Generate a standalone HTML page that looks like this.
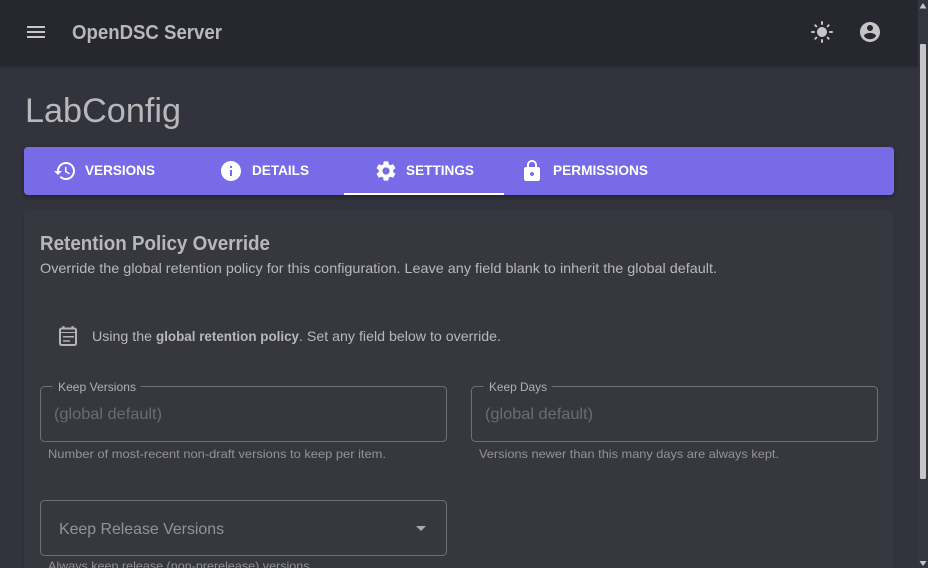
<!DOCTYPE html>
<html><head><meta charset="utf-8"><title>OpenDSC Server</title>
<style>
html,body{margin:0;padding:0;width:928px;height:568px;overflow:hidden;background:#32333d}
#w{position:relative;width:928px;height:568px;overflow:hidden;background:#32333d}
.a{position:absolute}
svg{position:absolute;left:0;top:0}
text{font-family:"Liberation Sans",sans-serif;white-space:pre}
</style></head>
<body>
<div id="w">
<div class="a" style="left:0;top:0;width:918px;height:66px;background:#27272f;box-shadow:0 1px 2px rgba(0,0,0,.2)"></div>
<div class="a" style="left:24px;top:147px;width:870px;height:48px;background:#776be7;border-radius:4px;box-shadow:0 2px 4px rgba(0,0,0,.3)"></div>
<div class="a" style="left:344px;top:193px;width:160px;height:2px;background:#fff"></div>
<div class="a" style="left:24px;top:211px;width:870px;height:357px;background:#373740;border-radius:4px 4px 0 0;box-shadow:0 2px 2px rgba(0,0,0,.14)"></div>
<div class="a" style="left:918px;top:0;width:10px;height:568px;background:#34353e"></div>
<div class="a" style="left:920px;top:44px;width:6px;height:435px;background:#c6c6c6;border-radius:1px"></div>
<svg width="928" height="568" viewBox="0 0 928 568">
<polygon points="923,3 919.5,8.5 926.5,8.5" fill="#c6c6c6"/>
<polygon points="919.5,561 926.5,561 923,566" fill="#c6c6c6"/>
<g fill="#c5c5c8">
<path transform="translate(24,20)" d="M3 18h18v-2H3v2zm0-5h18v-2H3v2zm0-7v2h18V6H3z"/>
<path transform="translate(810,20)" d="M12 7c-2.76 0-5 2.24-5 5s2.24 5 5 5 5-2.24 5-5-2.24-5-5-5zM2 13h2c.55 0 1-.45 1-1s-.45-1-1-1H2c-.55 0-1 .45-1 1s.45 1 1 1zm18 0h2c.55 0 1-.45 1-1s-.45-1-1-1h-2c-.55 0-1 .45-1 1s.45 1 1 1zM11 2v2c0 .55.45 1 1 1s1-.45 1-1V2c0-.55-.45-1-1-1s-1 .45-1 1zm0 18v2c0 .55.45 1 1 1s1-.45 1-1v-2c0-.55-.45-1-1-1s-1 .45-1 1zM5.99 4.58c-.39-.39-1.03-.39-1.41 0-.39.39-.39 1.03 0 1.41l1.06 1.06c.39.39 1.03.39 1.41 0s.39-1.03 0-1.41L5.99 4.58zm12.37 12.37c-.39-.39-1.03-.39-1.41 0-.39.39-.39 1.03 0 1.41l1.06 1.06c.39.39 1.03.39 1.41 0 .39-.39.39-1.03 0-1.41l-1.06-1.06zm1.06-10.96c.39-.39.39-1.03 0-1.41-.39-.39-1.03-.39-1.41 0l-1.06 1.06c-.39.39-.39 1.03 0 1.41s1.03.39 1.41 0l1.06-1.06zM7.05 18.36c.39-.39.39-1.03 0-1.41-.39-.39-1.03-.39-1.41 0l-1.06 1.06c-.39.39-.39 1.03 0 1.41s1.03.39 1.41 0l1.06-1.06z"/>
<path transform="translate(858,20)" d="M12 2C6.48 2 2 6.48 2 12s4.48 10 10 10 10-4.48 10-10S17.52 2 12 2zm0 3c1.66 0 3 1.34 3 3s-1.34 3-3 3-3-1.34-3-3 1.34-3 3-3zm0 14.2c-2.5 0-4.71-1.28-6-3.22.03-1.99 4-3.08 6-3.08 1.99 0 5.97 1.09 6 3.08-1.29 1.94-3.5 3.22-6 3.22z"/>
</g>
<g fill="none" stroke="#b4b4b7">
<rect x="60" y="328.5" width="16" height="16.5" rx="1.5" stroke-width="2"/>
<path d="M60 332.5H76" stroke-width="1"/>
<path d="M63.5 326V329M72.5 326V329" stroke-width="2"/>
<path d="M63 336.8H74M63 341H70" stroke-width="1.5"/>
</g>
<g fill="#fff">
<path transform="translate(53,159)" d="M13 3c-4.97 0-9 4.03-9 9H1l3.89 3.89.07.14L9 12H6c0-3.87 3.13-7 7-7s7 3.13 7 7-3.13 7-7 7c-1.93 0-3.68-.79-4.94-2.06l-1.42 1.42C8.27 19.99 10.51 21 13 21c4.97 0 9-4.03 9-9s-4.03-9-9-9zm-1 5v5l4.28 2.54.72-1.21-3.5-2.08V8H12z"/>
<path transform="translate(219,159)" d="M12 2C6.48 2 2 6.48 2 12s4.48 10 10 10 10-4.48 10-10S17.52 2 12 2zm1 15h-2v-6h2v6zm0-8h-2V7h2v2z"/>
<path transform="translate(374,159)" d="M19.14 12.94c.04-.3.06-.61.06-.94 0-.32-.02-.64-.07-.94l2.03-1.58c.18-.14.23-.41.12-.61l-1.92-3.32c-.12-.22-.37-.29-.59-.22l-2.39.96c-.5-.38-1.03-.7-1.62-.94l-.36-2.54c-.04-.24-.24-.41-.48-.41h-3.84c-.24 0-.43.17-.47.41l-.36 2.54c-.59.24-1.13.57-1.62.94l-2.39-.96c-.22-.08-.47 0-.59.22L2.74 8.87c-.12.21-.08.47.12.61l2.03 1.58c-.05.3-.09.63-.09.94s.02.64.07.94l-2.03 1.58c-.18.14-.23.41-.12.61l1.92 3.32c.12.22.37.29.59.22l2.39-.96c.5.38 1.03.7 1.62.94l.36 2.54c.05.24.24.41.48.41h3.84c.24 0 .44-.17.47-.41l.36-2.54c.59-.24 1.13-.56 1.62-.94l2.39.96c.22.08.47 0 .59-.22l1.92-3.32c.12-.22.07-.47-.12-.61l-2.01-1.58zM12 15.6c-1.98 0-3.6-1.62-3.6-3.6s1.62-3.6 3.6-3.6 3.6 1.62 3.6 3.6-1.62 3.6-3.6 3.6z"/>
<path transform="translate(520,159)" d="M18 8h-1V6c0-2.76-2.24-5-5-5S7 3.24 7 6v2H6c-1.1 0-2 .9-2 2v10c0 1.1.9 2 2 2h12c1.1 0 2-.9 2-2V10c0-1.1-.9-2-2-2zm-6 9c-1.1 0-2-.9-2-2s.9-2 2-2 2 .9 2 2-.9 2-2 2zm3.1-9H8.9V6c0-1.71 1.39-3.1 3.1-3.1 1.71 0 3.1 1.39 3.1 3.1v2z"/>
</g>
<g fill="none" stroke="#6f6f76" stroke-width="1">
<path d="M52.5 386.5H44.5a4 4 0 0 0-4 4V437.5a4 4 0 0 0 4 4H442.5a4 4 0 0 0 4-4V390.5a4 4 0 0 0-4-4H140.5"/>
<path d="M483.5 386.5H475.5a4 4 0 0 0-4 4V437.5a4 4 0 0 0 4 4H873.5a4 4 0 0 0 4-4V390.5a4 4 0 0 0-4-4H551.5"/>
<rect x="40.5" y="500.5" width="406" height="55" rx="4"/>
</g>
<polygon points="416,526 426,526 421,531" fill="#a9a9ad"/>
<g font-weight="700">
<text x="72" y="39" font-size="20" fill="#b8b8bb" textLength="150" lengthAdjust="spacingAndGlyphs">OpenDSC Server</text>
<g font-size="14" fill="#fff">
<text x="85" y="175" textLength="70" lengthAdjust="spacingAndGlyphs">VERSIONS</text>
<text x="252" y="175" textLength="57" lengthAdjust="spacingAndGlyphs">DETAILS</text>
<text x="406" y="175" textLength="68" lengthAdjust="spacingAndGlyphs">SETTINGS</text>
<text x="553" y="175" textLength="95" lengthAdjust="spacingAndGlyphs">PERMISSIONS</text>
</g>
<text x="40" y="250" font-size="20" fill="#b8b8bb" textLength="230" lengthAdjust="spacingAndGlyphs">Retention Policy Override</text>
<text x="156" y="341" font-size="14" fill="#b8b8bb" textLength="143" lengthAdjust="spacingAndGlyphs">global retention policy</text>
</g>
<text x="25" y="122" font-size="34" fill="#b8b8bb" textLength="156" lengthAdjust="spacingAndGlyphs">LabConfig</text>
<g font-size="14" fill="#b8b8bb">
<text x="40" y="273" textLength="677" lengthAdjust="spacingAndGlyphs">Override the global retention policy for this configuration. Leave any field blank to inherit the global default.</text>
<text x="92" y="341" textLength="60" lengthAdjust="spacingAndGlyphs">Using the</text>
<text x="299" y="341" textLength="202" lengthAdjust="spacingAndGlyphs">. Set any field below to override.</text>
</g>
<g font-size="12" fill="#b0b0b4">
<text x="58" y="391" textLength="78" lengthAdjust="spacingAndGlyphs">Keep Versions</text>
<text x="489" y="391" textLength="58" lengthAdjust="spacingAndGlyphs">Keep Days</text>
</g>
<g font-size="16" fill="#6b6b71">
<text x="54" y="419" textLength="108" lengthAdjust="spacingAndGlyphs">(global default)</text>
<text x="485" y="419" textLength="108" lengthAdjust="spacingAndGlyphs">(global default)</text>
</g>
<g font-size="12" fill="#939397">
<text x="48" y="458" textLength="338" lengthAdjust="spacingAndGlyphs">Number of most-recent non-draft versions to keep per item.</text>
<text x="479" y="458" textLength="300" lengthAdjust="spacingAndGlyphs">Versions newer than this many days are always kept.</text>
<text x="48" y="570" textLength="265" lengthAdjust="spacingAndGlyphs">Always keep release (non-prerelease) versions.</text>
</g>
<text x="59" y="534" font-size="16" fill="#939397" textLength="165" lengthAdjust="spacingAndGlyphs">Keep Release Versions</text>
</svg>
</div>
</body></html>
